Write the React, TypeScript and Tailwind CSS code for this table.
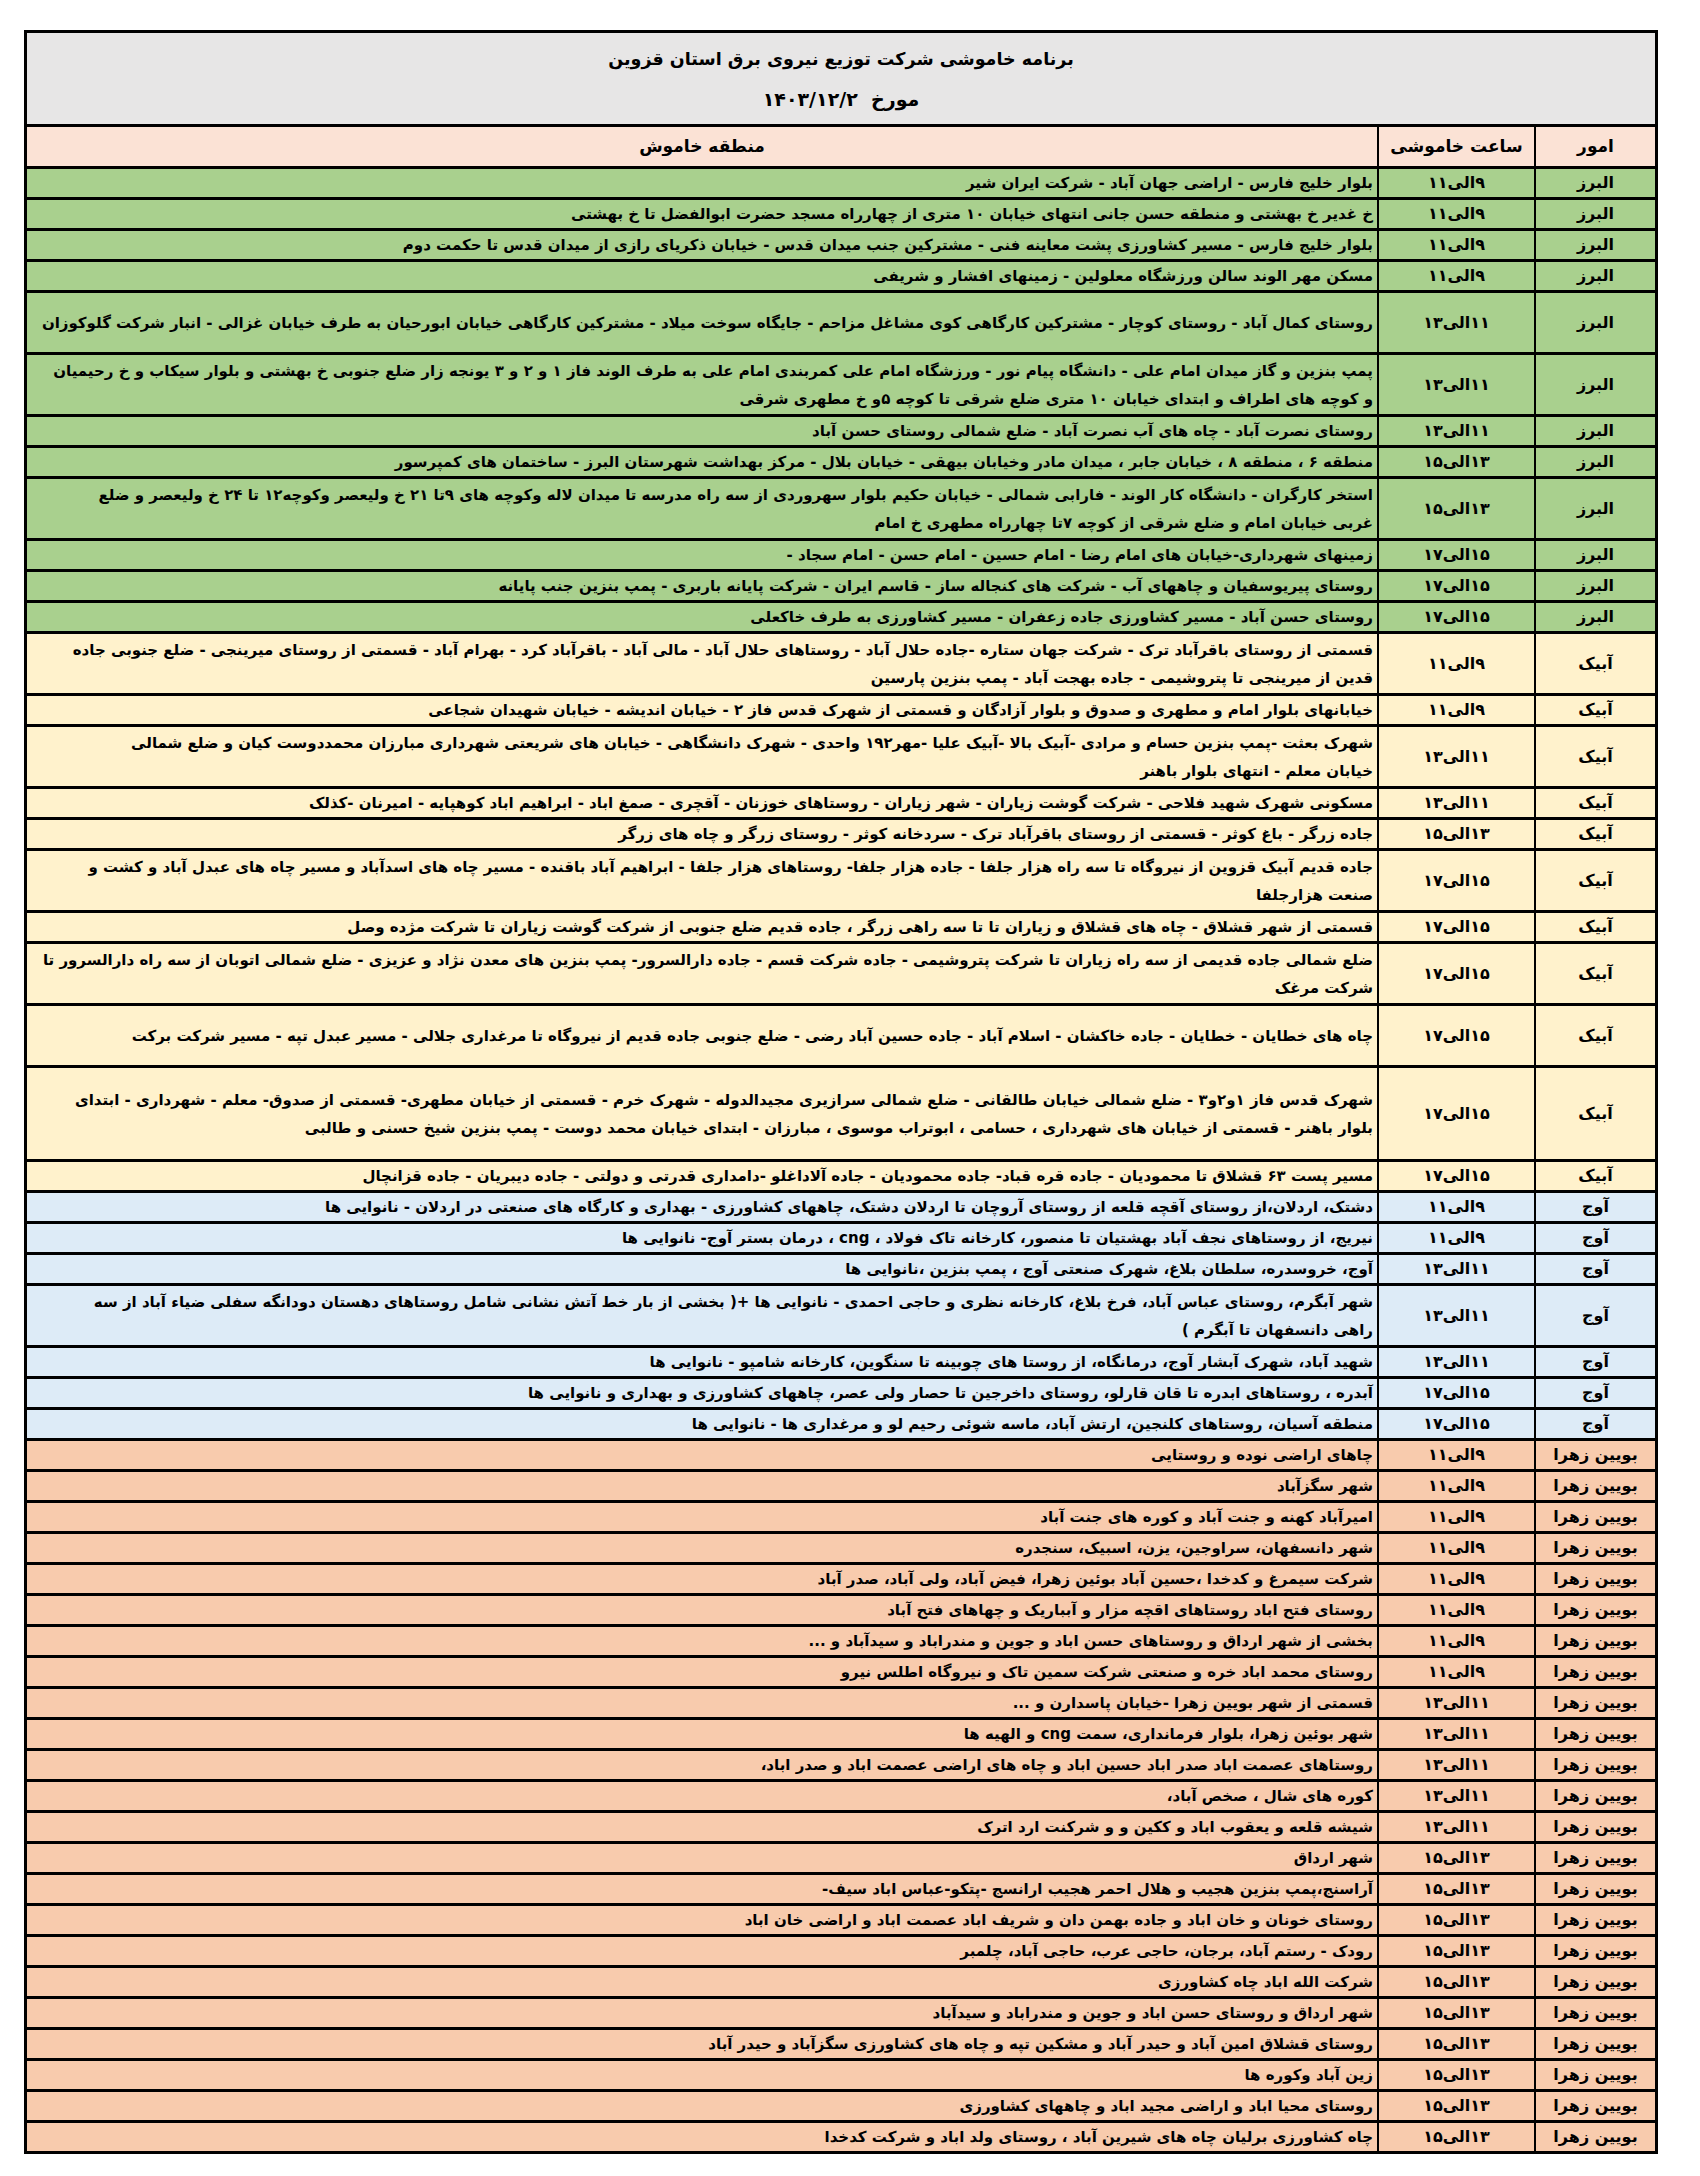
import React from "react";

type Row = { a: string; t: string; lines: string[]; u: number };

const rows: Row[] = [
  { a: "البرز", t: "۹الی۱۱", lines: ["بلوار خلیج فارس - اراضی جهان آباد - شرکت ایران شیر"], u: 1 },
  { a: "البرز", t: "۹الی۱۱", lines: ["خ غدیر خ بهشتی و منطقه حسن جانی انتهای خیابان ۱۰ متری از چهارراه مسجد حضرت ابوالفضل تا خ بهشتی"], u: 1 },
  { a: "البرز", t: "۹الی۱۱", lines: ["بلوار خلیج فارس - مسیر کشاورزی پشت معاینه فنی - مشترکین جنب میدان قدس - خیابان ذکریای رازی از میدان قدس تا حکمت دوم"], u: 1 },
  { a: "البرز", t: "۹الی۱۱", lines: ["مسکن مهر الوند سالن ورزشگاه معلولین -  زمینهای افشار و شریفی"], u: 1 },
  { a: "البرز", t: "۱۱الی۱۳", lines: ["روستای کمال آباد - روستای کوچار - مشترکین کارگاهی کوی مشاغل مزاحم - جایگاه سوخت میلاد - مشترکین کارگاهی خیابان ابورحیان به طرف خیابان غزالی - انبار شرکت گلوکوزان"], u: 2 },
  { a: "البرز", t: "۱۱الی۱۳", lines: ["پمپ بنزین و گاز میدان امام علی - دانشگاه پیام نور - ورزشگاه امام علی  کمربندی امام علی به طرف الوند فاز ۱ و ۲ و ۳ یونجه زار ضلع جنوبی خ بهشتی و بلوار سیکاب و خ رحیمیان", "و کوچه های اطراف و ابتدای خیابان ۱۰ متری ضلع شرقی تا کوچه ۵و خ مطهری شرقی"], u: 2 },
  { a: "البرز", t: "۱۱الی۱۳", lines: ["روستای نصرت آباد - چاه های آب نصرت آباد - ضلع شمالی روستای حسن آباد"], u: 1 },
  { a: "البرز", t: "۱۳الی۱۵", lines: ["منطقه ۶ ، منطقه ۸ ، خیابان جابر ، میدان مادر وخیابان بیهقی - خیابان بلال - مرکز بهداشت شهرستان البرز - ساختمان های کمپرسور"], u: 1 },
  { a: "البرز", t: "۱۳الی۱۵", lines: ["استخر کارگران - دانشگاه کار الوند - فارابی شمالی - خیابان حکیم بلوار سهروردی از سه راه مدرسه تا میدان لاله وکوچه های ۹تا ۲۱ خ ولیعصر وکوچه۱۲ تا ۲۴ خ ولیعصر و ضلع", "غربی خیابان امام و ضلع شرقی از کوچه ۷تا چهارراه مطهری خ امام"], u: 2 },
  { a: "البرز", t: "۱۵الی۱۷", lines: ["زمینهای شهرداری-خیابان های امام رضا - امام حسین - امام حسن - امام سجاد -"], u: 1 },
  { a: "البرز", t: "۱۵الی۱۷", lines: ["روستای پیریوسفیان  و چاههای آب - شرکت های کنجاله ساز - قاسم ایران - شرکت پایانه باربری - پمپ بنزین جنب پایانه"], u: 1 },
  { a: "البرز", t: "۱۵الی۱۷", lines: ["روستای حسن آباد -  مسیر کشاورزی جاده زعفران  - مسیر کشاورزی به طرف خاکعلی"], u: 1 },
  { a: "آبیک", t: "۹الی۱۱", lines: ["قسمتی از روستای باقرآباد ترک - شرکت جهان ستاره -جاده حلال آباد - روستاهای حلال آباد - مالی آباد - باقرآباد کرد - بهرام آباد - قسمتی از روستای میرینجی - ضلع جنوبی جاده", "قدین از میرینجی تا پتروشیمی - جاده بهجت آباد - پمپ بنزین پارسین"], u: 2 },
  { a: "آبیک", t: "۹الی۱۱", lines: ["خیابانهای بلوار امام و مطهری و صدوق و بلوار آزادگان و قسمتی از شهرک قدس فاز ۲ - خیابان اندیشه - خیابان شهیدان شجاعی"], u: 1 },
  { a: "آبیک", t: "۱۱الی۱۳", lines: ["شهرک بعثت -پمپ بنزین حسام و مرادی -آبیک بالا -آبیک علیا -مهر۱۹۲ واحدی - شهرک دانشگاهی  - خیابان های شریعتی شهرداری مبارزان محمددوست کیان و ضلع شمالی", "خیابان معلم -  انتهای بلوار باهنر"], u: 2 },
  { a: "آبیک", t: "۱۱الی۱۳", lines: ["مسکونی شهرک شهید فلاحی - شرکت گوشت زیاران - شهر زیاران - روستاهای خوزنان - آقچری - صمغ اباد - ابراهیم اباد کوهپایه - امیرنان -کذلک"], u: 1 },
  { a: "آبیک", t: "۱۳الی۱۵", lines: ["جاده زرگر - باغ کوثر - قسمتی از روستای باقرآباد ترک - سردخانه کوثر - روستای زرگر و چاه های زرگر"], u: 1 },
  { a: "آبیک", t: "۱۵الی۱۷", lines: ["جاده قدیم آبیک قزوین از نیروگاه تا سه راه هزار جلفا - جاده هزار جلفا- روستاهای هزار جلفا - ابراهیم آباد باقنده - مسیر چاه های اسدآباد و مسیر چاه های عبدل آباد و کشت و", "صنعت هزارجلفا"], u: 2 },
  { a: "آبیک", t: "۱۵الی۱۷", lines: ["قسمتی از شهر قشلاق - چاه های قشلاق و زیاران تا تا سه راهی زرگر ، جاده قدیم ضلع جنوبی از شرکت گوشت زیاران تا شرکت مژده وصل"], u: 1 },
  { a: "آبیک", t: "۱۵الی۱۷", lines: ["ضلع شمالی جاده قدیمی از سه راه زیاران تا شرکت پتروشیمی - جاده شرکت قسم - جاده دارالسرور- پمپ بنزین های معدن نژاد و عزیزی - ضلع شمالی اتوبان از سه راه دارالسرور تا", "شرکت مرغک"], u: 2 },
  { a: "آبیک", t: "۱۵الی۱۷", lines: ["چاه های خطایان  - خطایان - جاده خاکشان - اسلام آباد - جاده حسین آباد رضی - ضلع جنوبی جاده قدیم از نیروگاه تا مرغداری جلالی - مسیر عبدل تپه - مسیر شرکت برکت"], u: 2 },
  { a: "آبیک", t: "۱۵الی۱۷", lines: ["شهرک قدس فاز ۱و۲و۳ - ضلع شمالی خیابان طالقانی - ضلع شمالی سرازیری مجیدالدوله - شهرک خرم - قسمتی از خیابان مطهری- قسمتی از صدوق- معلم - شهرداری - ابتدای", "بلوار باهنر - قسمتی از خیابان های شهرداری ، حسامی ، ابوتراب موسوی ، مبارزان - ابتدای خیابان محمد دوست - پمپ بنزین شیخ حسنی و طالبی"], u: 3 },
  { a: "آبیک", t: "۱۵الی۱۷", lines: ["مسیر پست ۶۳ قشلاق تا محمودیان - جاده قره قباد- جاده محمودیان - جاده آلاداغلو -دامداری قدرتی و دولتی - جاده دیبریان - جاده قزانچال"], u: 1 },
  { a: "آوج", t: "۹الی۱۱", lines: ["دشتک، اردلان،از روستای آقچه قلعه از روستای آروچان تا اردلان دشتک، چاههای کشاورزی - بهداری و کارگاه های صنعتی در اردلان  - نانوایی ها"], u: 1 },
  { a: "آوج", t: "۹الی۱۱", lines: ["نیریج، از روستاهای نجف آباد بهشتیان تا منصور، کارخانه تاک فولاد ، cng  ، درمان بستر آوج- نانوایی ها"], u: 1 },
  { a: "آوج", t: "۱۱الی۱۳", lines: ["آوج، خروسدره، سلطان بلاغ، شهرک صنعتی آوج ، پمپ بنزین ،نانوایی ها"], u: 1 },
  { a: "آوج", t: "۱۱الی۱۳", lines: ["شهر آبگرم، روستای عباس آباد، فرخ بلاغ، کارخانه نظری و حاجی احمدی - نانوایی ها +( بخشی از بار خط آتش نشانی شامل روستاهای دهستان دودانگه سفلی ضیاء آباد از سه", "راهی دانسفهان تا آبگرم )"], u: 2 },
  { a: "آوج", t: "۱۱الی۱۳", lines: ["شهید آباد، شهرک آبشار آوج، درمانگاه، از روستا های چوبینه تا سنگوین، کارخانه شامپو - نانوایی ها"], u: 1 },
  { a: "آوج", t: "۱۵الی۱۷", lines: ["آبدره ، روستاهای ابدره تا قان قارلو، روستای داخرجین تا حصار ولی عصر، چاههای کشاورزی و بهداری و  نانوایی ها"], u: 1 },
  { a: "آوج", t: "۱۵الی۱۷", lines: ["منطقه آسیان، روستاهای کلنجین، ارتش آباد، ماسه شوئی رحیم لو و مرغداری ها  - نانوایی ها"], u: 1 },
  { a: "بویین زهرا", t: "۹الی۱۱", lines: ["چاهای اراضی نوده و روستایی"], u: 1 },
  { a: "بویین زهرا", t: "۹الی۱۱", lines: ["شهر سگزآباد"], u: 1 },
  { a: "بویین زهرا", t: "۹الی۱۱", lines: ["امیرآباد کهنه و جنت آباد و کوره های جنت آباد"], u: 1 },
  { a: "بویین زهرا", t: "۹الی۱۱", lines: ["شهر دانسفهان، سراوجین، یزن، اسبیک، سنجدره"], u: 1 },
  { a: "بویین زهرا", t: "۹الی۱۱", lines: ["شرکت سیمرغ و کدخدا ،حسین آباد بوئین زهرا، فیض آباد، ولی آباد، صدر آباد"], u: 1 },
  { a: "بویین زهرا", t: "۹الی۱۱", lines: ["روستای فتح اباد روستاهای اقچه مزار و آبباریک و چهاهای فتح آباد"], u: 1 },
  { a: "بویین زهرا", t: "۹الی۱۱", lines: ["بخشی از شهر ارداق و روستاهای حسن اباد و جوین و مندراباد و سیدآباد و ..."], u: 1 },
  { a: "بویین زهرا", t: "۹الی۱۱", lines: ["روستای محمد اباد خره و صنعتی شرکت سمین تاک و نیروگاه اطلس نیرو"], u: 1 },
  { a: "بویین زهرا", t: "۱۱الی۱۳", lines: ["قسمتی از شهر بویین زهرا -خیابان پاسدارن  و ..."], u: 1 },
  { a: "بویین زهرا", t: "۱۱الی۱۳", lines: ["شهر بوئین زهرا، بلوار فرمانداری، سمت  cng  و الهیه ها"], u: 1 },
  { a: "بویین زهرا", t: "۱۱الی۱۳", lines: ["روستاهای عصمت اباد صدر اباد حسین اباد و چاه های اراضی عصمت اباد و صدر اباد،"], u: 1 },
  { a: "بویین زهرا", t: "۱۱الی۱۳", lines: ["کوره های شال ، صخص آباد،"], u: 1 },
  { a: "بویین زهرا", t: "۱۱الی۱۳", lines: ["شیشه قلعه و یعقوب اباد و ککین و و شرکنت ارد اترک"], u: 1 },
  { a: "بویین زهرا", t: "۱۳الی۱۵", lines: ["شهر ارداق"], u: 1 },
  { a: "بویین زهرا", t: "۱۳الی۱۵", lines: ["آراسنج،پمپ بنزین هجیب و هلال احمر هجیب ارانسج -پتکو-عباس اباد سیف-"], u: 1 },
  { a: "بویین زهرا", t: "۱۳الی۱۵", lines: ["روستای خونان و خان اباد و جاده بهمن دان و شریف اباد عصمت اباد و اراضی خان اباد"], u: 1 },
  { a: "بویین زهرا", t: "۱۳الی۱۵", lines: ["رودک - رستم آباد، برجان، حاجی عرب، حاجی آباد، چلمبر"], u: 1 },
  { a: "بویین زهرا", t: "۱۳الی۱۵", lines: ["شرکت الله اباد چاه کشاورزی"], u: 1 },
  { a: "بویین زهرا", t: "۱۳الی۱۵", lines: ["شهر ارداق و روستای حسن اباد و جوین و مندراباد و سیدآباد"], u: 1 },
  { a: "بویین زهرا", t: "۱۳الی۱۵", lines: ["روستای قشلاق امین آباد و حیدر آباد و مشکین تپه و چاه های کشاورزی سگزآباد و حیدر آباد"], u: 1 },
  { a: "بویین زهرا", t: "۱۳الی۱۵", lines: ["زین آباد وکوره ها"], u: 1 },
  { a: "بویین زهرا", t: "۱۳الی۱۵", lines: ["روستای محیا اباد و اراضی مجید اباد و چاههای کشاورزی"], u: 1 },
  { a: "بویین زهرا", t: "۱۳الی۱۵", lines: ["چاه کشاورزی برلیان چاه های شیرین آباد ،  روستای ولد اباد و شرکت کدخدا"], u: 1 },
];

const bg: Record<string, string> = {
  "البرز": "bg-[#a9d08e]",
  "آبیک": "bg-[#fff2cc]",
  "آوج": "bg-[#ddebf7]",
  "بویین زهرا": "bg-[#f8cbad]",
};

const heights: Record<number, string> = {
  1: "h-[31px]",
  2: "h-[62px]",
  3: "h-[94px]",
};

export default function App() {
  return (
    <div className="w-[1700px] h-[2176px] bg-white pt-[30px] pl-[24px] font-['DejaVu_Sans',sans-serif] text-black">
      <div dir="rtl" className="w-[1634px] border-x-[3px] border-t-[3px] border-black">
        <div className="h-[94px] bg-[#e7e6e6] border-b-[3px] border-black flex flex-col items-center justify-center gap-[14px] font-bold">
          <div className="text-[17.5px] leading-[26px]">برنامه خاموشی شرکت توزیع نیروی برق استان قزوین</div>
          <div className="text-[19px] leading-[26px]">مورخ&nbsp; ۱۴۰۳/۱۲/۲</div>
        </div>
        <div className="grid grid-cols-[121px_157px_1fr] h-[42px] bg-[#fbe2d5] border-b-[3px] border-black font-bold text-[17px]">
          <div className="flex items-center justify-center border-l-2 border-black">امور</div>
          <div className="flex items-center justify-center border-l-2 border-black">ساعت خاموشی</div>
          <div className="flex items-center justify-center">منطقه خاموش</div>
        </div>
        {rows.map((r, i) => (
          <div
            key={i}
            className={`grid grid-cols-[121px_157px_1fr] ${heights[r.u]} ${bg[r.a]} border-b-[3px] border-black font-bold text-[15px]`}
          >
            <div className="flex items-center justify-center border-l-2 border-black text-[16px]">{r.a}</div>
            <div className="flex items-center justify-center border-l-2 border-black text-[16px]">{r.t}</div>
            <div className="flex flex-col justify-center px-[4px] leading-[28px] whitespace-nowrap overflow-hidden">
              {r.lines.map((l, j) => (
                <div key={j}>{l}</div>
              ))}
            </div>
          </div>
        ))}
      </div>
    </div>
  );
}
